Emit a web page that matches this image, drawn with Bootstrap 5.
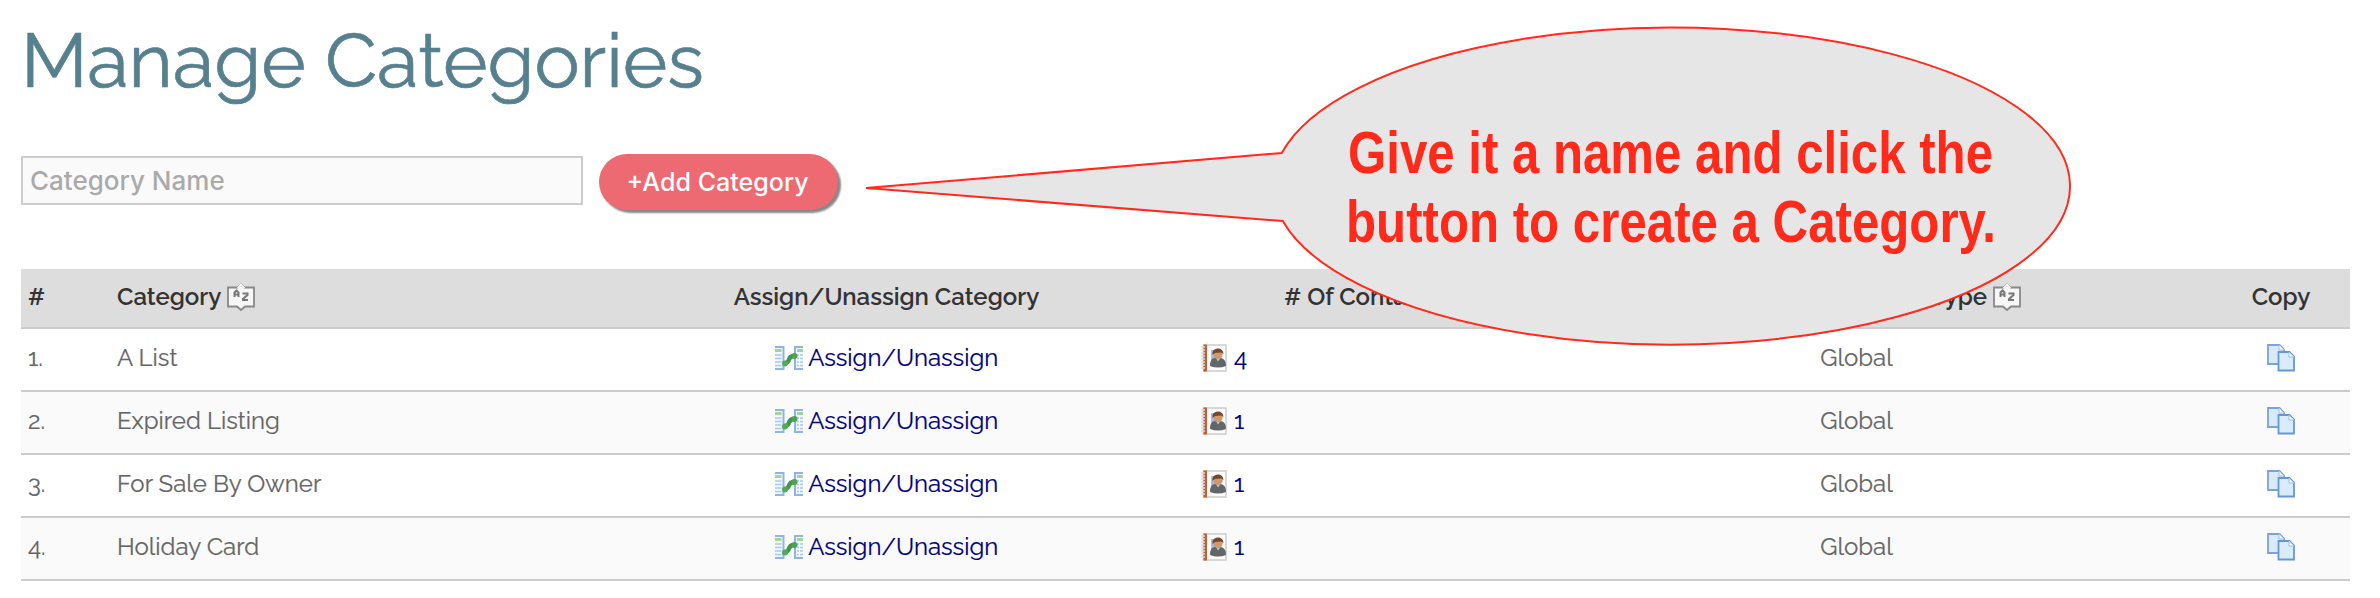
<!DOCTYPE html>
<html lang="en">
<head>
<meta charset="utf-8">
<meta name="viewport" content="width=device-width, initial-scale=1">
<title>Manage Categories</title>
<link href="https://cdn.jsdelivr.net/npm/bootstrap@5.3.0/dist/css/bootstrap.min.css" rel="stylesheet">
<style>
body{font-family:Raleway,Lato,sans-serif;font-size:24px;line-height:36px;color:#666;background:#fff;overflow:hidden}
.page{padding:13px 30px 0 21px}
.page-title{font-size:76px;line-height:96px;height:96px;color:#57808f;font-weight:400;letter-spacing:-.05px;-webkit-text-stroke:.6px #57808f}
.add-form{margin-top:45px;gap:16px}
.name-input{width:562px;height:49px;margin-top:2px;border:2px solid #ccc;border-radius:0;background:#fafafa;padding:0 7px;font:500 26px/45px Inter,sans-serif;color:#666}
.name-input::placeholder{color:#aaa;opacity:1}
.btn-add{width:239px;height:56px;border:0;border-radius:28px;background:#ee6a72;color:#fff;padding:0 2px 0 0;font:500 25.1px/54px Inter,sans-serif;box-shadow:3px 3px 2px #888}
.btn-add:hover{background:#ee6a72;color:#fff}
.cat-table{table-layout:fixed;width:2329px;margin:59px 0 0;--bs-table-bg:transparent;color:#666}
.cat-table>:not(caption)>*>*{padding:0 7px 0 6px;border-bottom:2px solid #ccc;box-shadow:none;color:inherit;vertical-align:top}
.cat-table tr>:first-child{padding-left:7px}
.cat-table th{background:#ddd;color:#333!important;font-weight:600;height:59px;padding-top:10px!important}
.cat-table td{height:63px;padding-top:11px!important;-webkit-text-stroke:.2px}
.cat-table tbody tr:nth-child(even){background:#fafafa}
.cat-table a{color:#00007f;text-decoration:none}
.cat-table .contact-cell{padding-left:37px}
.cat-table tr>:last-child{padding-left:68px!important}
.sort-head{gap:6px}
.type-head{padding-right:123px}
.num{font-variant-numeric:oldstyle-nums}
.ico{width:28px;height:28px;display:inline-block;vertical-align:top;margin-top:4px}
th .ico{margin-top:4px}
.callout{left:860px;top:20px;overflow:visible}
</style>
</head>
<body>
<svg class="d-none">
<symbol id="sort" viewBox="0 0 28 28"><path d="M1 4.500H10.500L14 1.500L17.500 4.500H27V23.500H18L14 27L10 23.500H1Z" fill="#f6f6f6" stroke="#888" stroke-width="1.800"/><path d="M10.500 5L14 1.500L17.500 5" fill="none" stroke="#fff" stroke-width="1.500"/><path d="M7.500 14V9.500L9.500 7.500L11.500 9.500V14M7.500 11.500H11.500M15.500 10.500H20.500V12L16 16V17H21" fill="none" stroke="#777" stroke-width="2"/></symbol>
<symbol id="assign" viewBox="0 0 28 28"><path d="M0 3H8.500V25H0M28 3H20V25H28" fill="#f0f7ff" stroke="#8fb5e0" stroke-width="2"/><path d="M0 6.500H6.500M22 6.500H28" stroke="#a3d59a" stroke-width="3"/><path d="M0 11H6.500M0 14.500H6.500M0 18H6.500M0 21.500H6.500M22 11H28M22 14.500H28M22 18H28M22 21.500H28" stroke="#a9c9ee" stroke-width="1.500"/><path d="M24.500 10V23" stroke="#fff"/><path d="M10 19Q13 19 14 15.500Q15 12 19 12" fill="none" stroke="#41964a" stroke-width="4.500"/><circle cx="10" cy="19.500" r="3" fill="#55aa59"/><circle cx="19.500" cy="12" r="3" fill="#4ca152"/></symbol>
<symbol id="contact" viewBox="0 0 28 28"><path d="M3.500 1H26V27H3.500Z" fill="#fcfcfc" stroke="#ccc" stroke-width="1.500"/><path d="M3.500 .500H7V27.500H3.500Z" fill="#c55e35"/><path d="M1 3H5M1 6H5M1 9H5M1 12H5M1 15H5M1 18H5M1 21H5M1 24H5" stroke="#ddd" stroke-width="1.500"/><path d="M11 6H16V17H11Z" fill="#9cc0ed"/><path d="M10 22Q10 14 15 14H21Q26 15 26 22Q18 25 10 22Z" fill="#626668"/><path d="M16 14L18 17.500L20.500 14Z" fill="#c4c8cc"/><circle cx="18" cy="10.500" r="4.600" fill="#d09a6c"/><path d="M12.500 11V8Q14 4.500 18 4.500Q23 4.500 23.500 10L21 8.500L15 9Z" fill="#76492d"/></symbol>
<symbol id="copy" viewBox="0 0 28 28"><path d="M1 1H12.500L17 5.500V20H1Z" fill="#d9eafb" stroke="#79a3d9" stroke-width="1.800"/><path d="M12 1V6H17" fill="#fff" stroke="#9abce6"/><path d="M11.500 8H22.500L27 12.500V26.500H11.500Z" fill="#d9ecfe" stroke="#6896d2" stroke-width="1.800"/><path d="M22 8V13H27" fill="#fff" stroke="#9abce6"/></symbol>
</svg>
<main class="page position-relative">
<h1 class="page-title mb-0">Manage Categories</h1>
<form class="d-flex add-form">
<input class="form-control name-input flex-shrink-0" type="text" placeholder="Category Name">
<button class="btn btn-add" type="button">+Add Category</button>
</form>
<table class="table cat-table">
<colgroup><col style="width:90px"><col style="width:500px"><col style="width:552px"><col style="width:400px"><col style="width:588px"><col style="width:199px"></colgroup>
<thead><tr><th>#</th><th><span class="d-flex sort-head"><span>Category</span><svg class="ico"><use href="#sort"/></svg></span></th><th class="text-center">Assign/Unassign Category</th><th class="text-center"># Of Contacts</th><th><span class="d-flex sort-head justify-content-end type-head"><span>Type</span><svg class="ico"><use href="#sort"/></svg></span></th><th class="text-center">Copy</th></tr></thead>
<tbody>
<tr><td class="num">1.</td><td>A List</td><td class="text-center"><a href="#"><svg class="ico"><use href="#assign"/></svg> Assign/Unassign</a></td><td class="contact-cell"><a href="#" class="num"><svg class="ico"><use href="#contact"/></svg> 4</a></td><td class="text-center">Global</td><td class="text-center"><svg class="ico"><use href="#copy"/></svg></td></tr>
<tr><td class="num">2.</td><td>Expired Listing</td><td class="text-center"><a href="#"><svg class="ico"><use href="#assign"/></svg> Assign/Unassign</a></td><td class="contact-cell"><a href="#" class="num"><svg class="ico"><use href="#contact"/></svg> 1</a></td><td class="text-center">Global</td><td class="text-center"><svg class="ico"><use href="#copy"/></svg></td></tr>
<tr><td class="num">3.</td><td>For Sale By Owner</td><td class="text-center"><a href="#"><svg class="ico"><use href="#assign"/></svg> Assign/Unassign</a></td><td class="contact-cell"><a href="#" class="num"><svg class="ico"><use href="#contact"/></svg> 1</a></td><td class="text-center">Global</td><td class="text-center"><svg class="ico"><use href="#copy"/></svg></td></tr>
<tr><td class="num">4.</td><td>Holiday Card</td><td class="text-center"><a href="#"><svg class="ico"><use href="#assign"/></svg> Assign/Unassign</a></td><td class="contact-cell"><a href="#" class="num"><svg class="ico"><use href="#contact"/></svg> 1</a></td><td class="text-center">Global</td><td class="text-center"><svg class="ico"><use href="#copy"/></svg></td></tr>
</tbody></table>
<svg class="callout position-absolute" width="1220" height="335" viewBox="860 20 1220 335"><path d="M866 188L1281.800 153A398.500 158.500 0 1 1 1282.800 221Z" fill="#e6e6e6" stroke="#ff2a1a" stroke-width="2"/><g fill="#ff2a1a" font-family="'Liberation Sans',Arial,sans-serif" font-weight="700" font-size="60"><text x="1348" y="173" textLength="645" lengthAdjust="spacingAndGlyphs">Give it a name and click the</text><text x="1346" y="242" textLength="650" lengthAdjust="spacingAndGlyphs">button to create a Category.</text></g></svg>
</main>
<script src="https://cdn.jsdelivr.net/npm/bootstrap@5.3.0/dist/js/bootstrap.bundle.min.js"></script>
</body>
</html>
